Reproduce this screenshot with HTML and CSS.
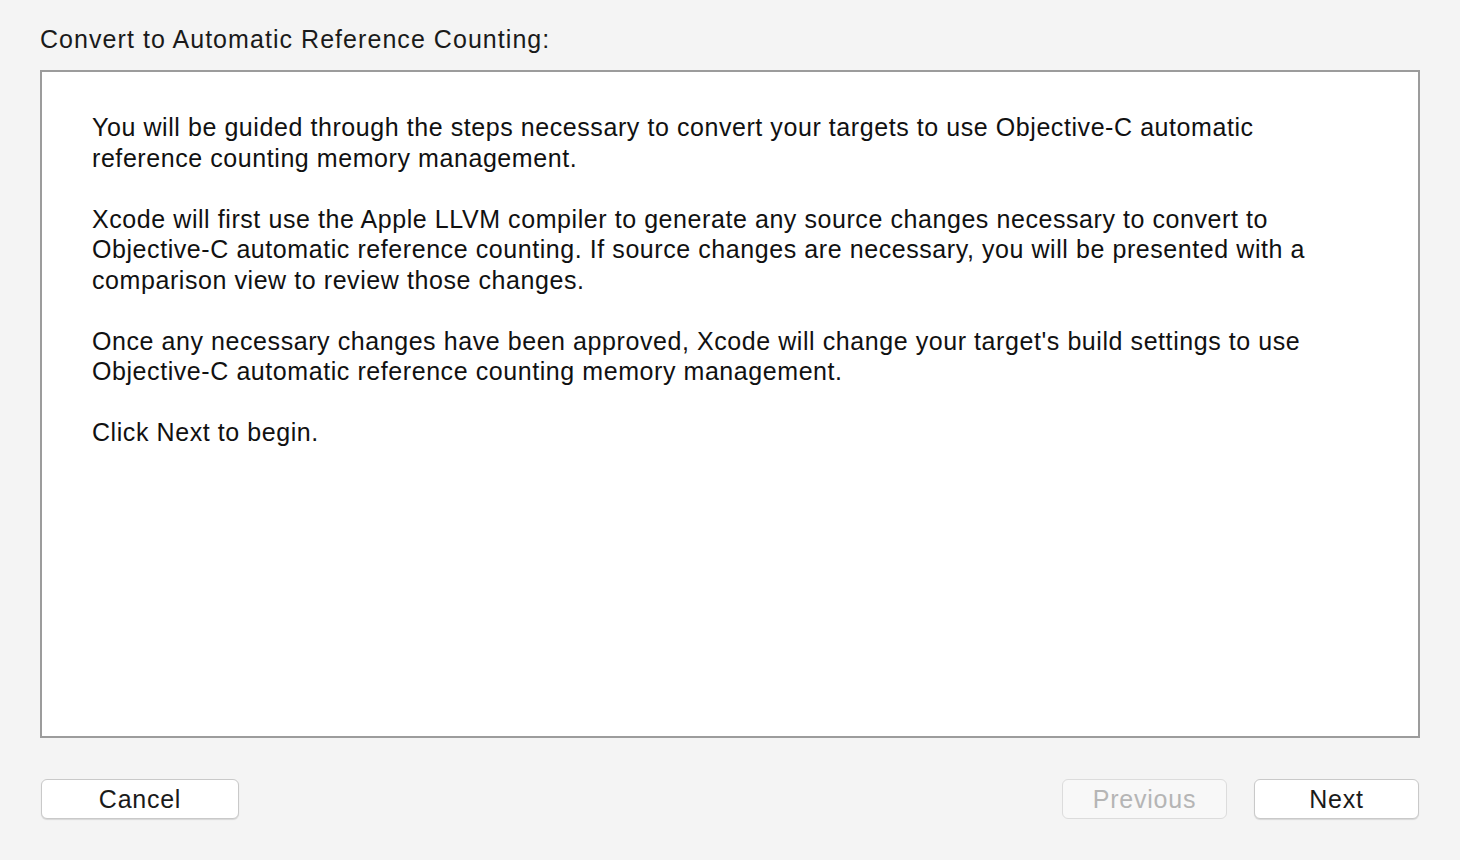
FILE: index.html
```html
<!DOCTYPE html>
<html>
<head>
<meta charset="utf-8">
<link rel="stylesheet" href="styles.css">
</head>
<body>
<div class="window">
  <div class="title">Convert to Automatic Reference Counting:</div>
  <div class="panel">
    <p>You will be guided through the steps necessary to convert your targets to use Objective-C automatic reference counting memory management.</p>
    <p>Xcode will first use the Apple LLVM compiler to generate any source changes necessary to convert to Objective-C automatic reference counting. If source changes are necessary, you will be presented with a comparison view to review those changes.</p>
    <p>Once any necessary changes have been approved, Xcode will change your target's build settings to use Objective-C automatic reference counting memory management.</p>
    <p>Click Next to begin.</p>
  </div>
  <div class="buttons">
    <button class="btn cancel">Cancel</button>
    <div class="spacer"></div>
    <button class="btn prev" disabled>Previous</button>
    <button class="btn next">Next</button>
  </div>
</div>
</body>
</html>
```

FILE: styles.css
```css
html, body {
  margin: 0;
  padding: 0;
  background: #f4f4f4;
}
body {
  font-family: "Liberation Sans", Arial, sans-serif;
  color: #111;
  width: 1460px;
  height: 860px;
  overflow: hidden;
}
.window {
  padding: 24px 40px 0 40px;
  display: flex;
  flex-direction: column;
}
.title {
  font-size: 25px;
  line-height: 30px;
  height: 46px;
  letter-spacing: 1.05px;
  color: #1a1a1a;
}
.panel {
  box-sizing: border-box;
  height: 668px;
  width: 1380px;
  background: #fff;
  border: 2px solid #9c9c9c;
  padding: 40px 50px 0 50px;
  font-size: 25px;
  letter-spacing: 0.57px;
  line-height: 30.5px;
}
.panel p {
  margin: 0 0 30.5px 0;
}
.buttons {
  display: flex;
  align-items: center;
  margin-top: 41px;
  padding-left: 1px;
}
.spacer { flex: 1; }
.btn {
  box-sizing: border-box;
  height: 40px;
  background: #fff;
  border: 1px solid #c9c9c9;
  border-radius: 6px;
  box-shadow: 0 1px 1px rgba(0,0,0,0.12);
  font-family: "Liberation Sans", Arial, sans-serif;
  font-size: 25px;
  letter-spacing: 0.75px;
  color: #1a1a1a;
  padding: 0;
}
.cancel { width: 198px; }
.prev {
  width: 165px;
  background: #f8f8f8;
  color: #b5b5b5;
  border-color: #dcdcdc;
  box-shadow: none;
  margin-right: 27px;
}
.next { width: 165px; margin-right: 1px; }
```
